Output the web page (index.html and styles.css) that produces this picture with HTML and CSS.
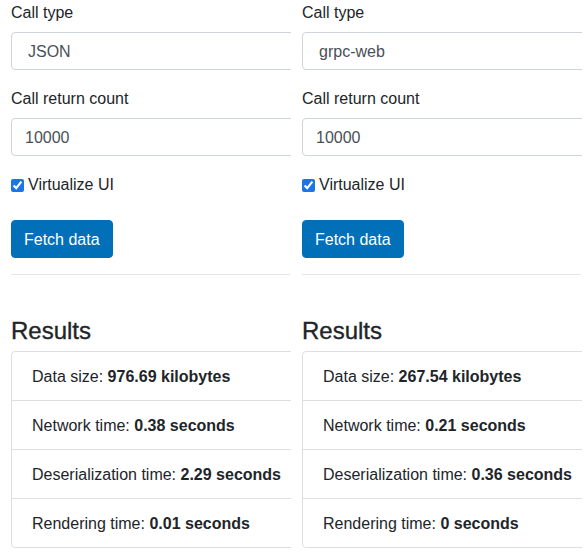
FILE: index.html
```html
<!DOCTYPE html>
<html lang="en">
<head>
<meta charset="utf-8">
<title>Benchmark</title>
<link rel="stylesheet" href="styles.css">
</head>
<body>
<div class="columns">
  <section class="col">
    <div class="inner">
      <div class="form-group">
        <label class="label">Call type</label>
        <div class="control select">JSON</div>
      </div>
      <div class="form-group">
        <label class="label">Call return count</label>
        <div class="control">10000</div>
      </div>
      <label class="check"><input type="checkbox" checked> Virtualize UI</label>
      <button class="btn">Fetch data</button>
      <hr class="rule">
      <h4 class="heading">Results</h4>
      <ul class="list">
        <li class="item">Data size: <b>976.69 kilobytes</b></li>
        <li class="item">Network time: <b>0.38 seconds</b></li>
        <li class="item">Deserialization time: <b>2.29 seconds</b></li>
        <li class="item">Rendering time: <b>0.01 seconds</b></li>
      </ul>
    </div>
  </section>
  <section class="col">
    <div class="inner">
      <div class="form-group">
        <label class="label">Call type</label>
        <div class="control select">grpc-web</div>
      </div>
      <div class="form-group">
        <label class="label">Call return count</label>
        <div class="control">10000</div>
      </div>
      <label class="check"><input type="checkbox" checked> Virtualize UI</label>
      <button class="btn">Fetch data</button>
      <hr class="rule">
      <h4 class="heading">Results</h4>
      <ul class="list">
        <li class="item">Data size: <b>267.54 kilobytes</b></li>
        <li class="item">Network time: <b>0.21 seconds</b></li>
        <li class="item">Deserialization time: <b>0.36 seconds</b></li>
        <li class="item">Rendering time: <b>0 seconds</b></li>
      </ul>
    </div>
  </section>
</div>
</body>
</html>
```

FILE: styles.css
```css
html, body {
  margin: 0;
  padding: 0;
  overflow: hidden;
  background: #fff;
}
body {
  font-family: "Liberation Sans", Arial, sans-serif;
  font-size: 16px;
  line-height: 1.5;
  color: #212529;
}
.columns {
  display: grid;
  grid-template-columns: 291px 291px;
}
.col {
  overflow: hidden;
  padding-left: 11px;
}
.inner {
  width: 380px;
}
.form-group {
  margin-bottom: 16px;
}
.label {
  display: block;
  padding-top: 1px;
  height: 23px;
  margin-bottom: 8px;
}
.control {
  box-sizing: border-box;
  height: 38px;
  border: 1px solid #ced4da;
  border-radius: 4px;
  padding: 7px 12px 5px 13px;
  color: #495057;
  line-height: 24px;
}
.control.select {
  padding-left: 16px;
}
.check {
  display: flex;
  align-items: center;
  height: 24px;
  padding-top: 1px;
  margin-bottom: 23px;
}
.check input {
  margin: 0 4px 0 0;
  width: 13px;
  height: 13px;
  accent-color: #1a75e6;
}
.btn {
  display: block;
  box-sizing: border-box;
  height: 38px;
  padding: 7px 12px 5px;
  font-family: inherit;
  font-size: 16px;
  line-height: 24px;
  color: #fff;
  background: #0170b9;
  border: 1px solid #0170b9;
  border-radius: 4px;
}
.rule {
  margin: 16px 0 0;
  border: 0;
  border-top: 1px solid #e6e6e6;
  width: 279px;
}
.heading {
  margin: 40px 0 7px;
  padding-top: 2px;
  height: 27px;
  font-size: 24px;
  font-weight: 400;
  line-height: 1.2;
  -webkit-text-stroke: 0.35px #212529;
}
.list {
  list-style: none;
  margin: 0;
  padding: 0;
}
.item {
  border: 1px solid #dfdfdf;
  margin-bottom: -1px;
  padding: 13px 20px 11px;
}
.item:first-child {
  border-top-left-radius: 4px;
  border-top-right-radius: 4px;
}
.item:last-child {
  border-bottom-left-radius: 4px;
  border-bottom-right-radius: 4px;
  margin-bottom: 0;
}
.item b {
  font-weight: 700;
}
```
